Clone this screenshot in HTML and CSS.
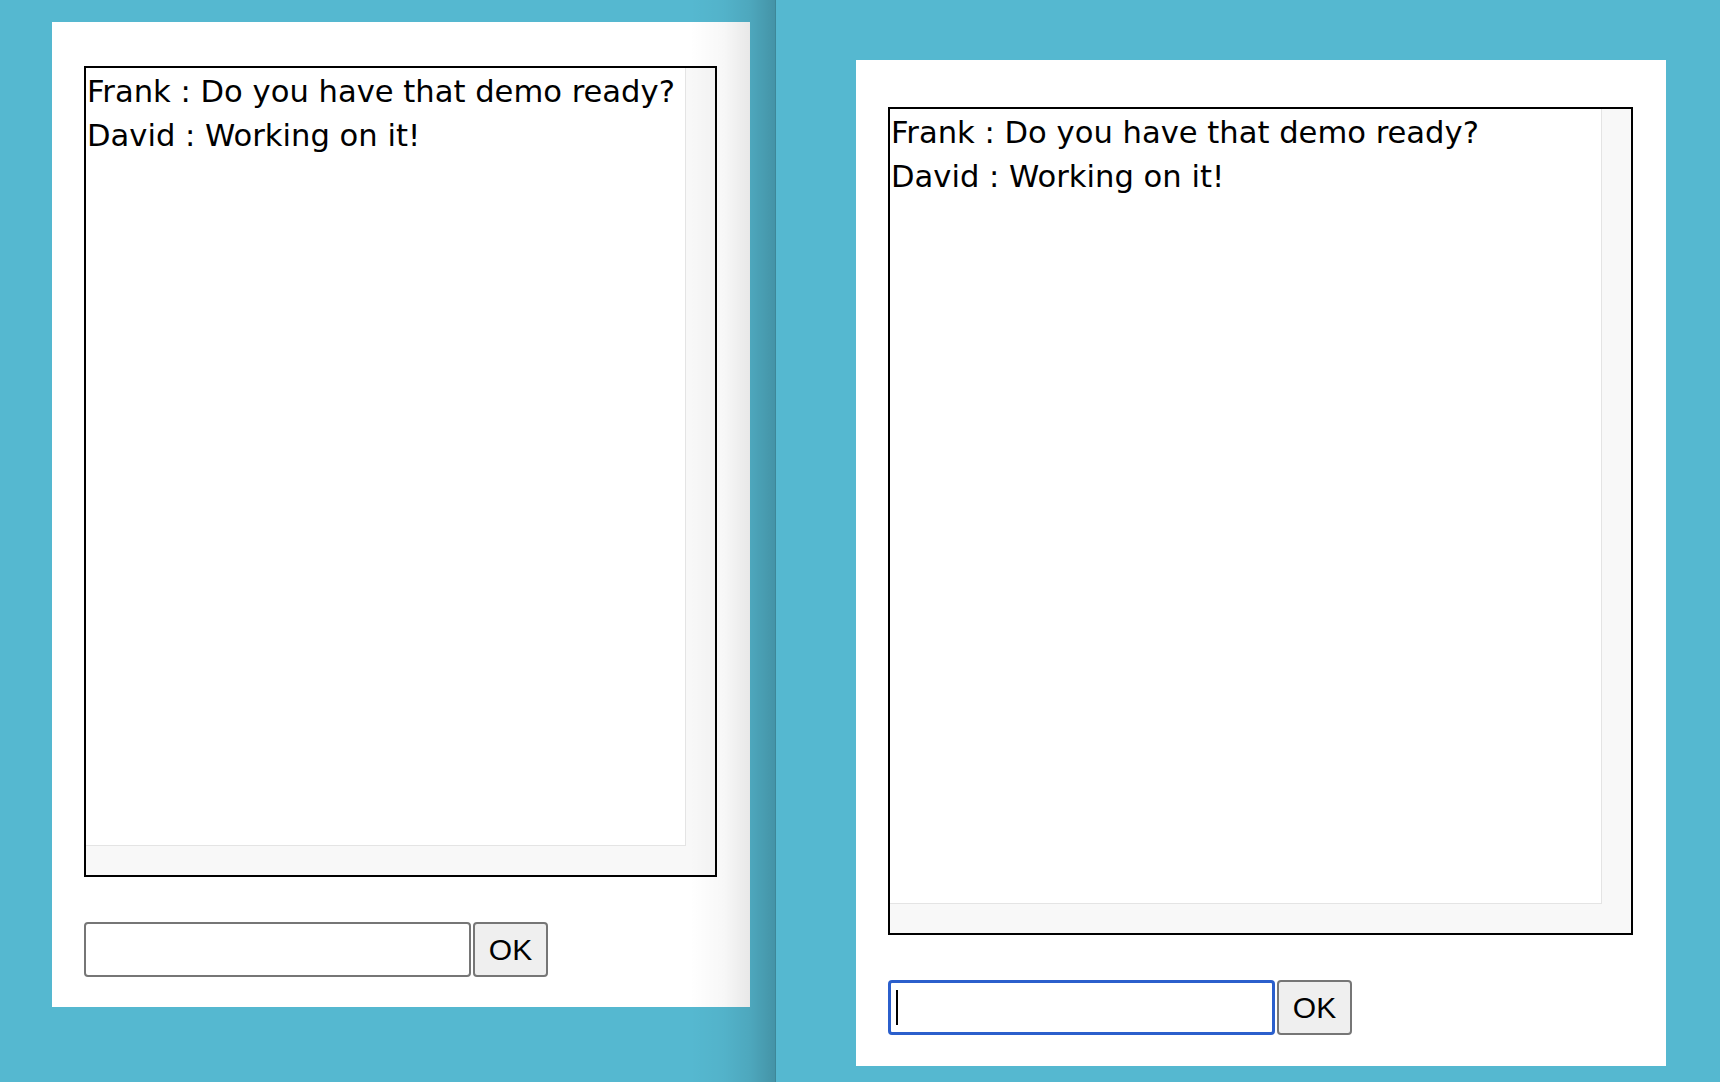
FILE: index.html
```html
<!DOCTYPE html>
<html lang="en">
<head>
<meta charset="utf-8">
<title>Chat demo</title>
<link rel="stylesheet" href="styles.css">
</head>
<body>
<div class="screen">
  <section class="pane pane-left">
    <div class="card card-left">
      <div class="log log-left">
        <div class="log-content">
          <div class="msg">Frank : Do you have that demo ready?</div>
          <div class="msg">David : Working on it!</div>
        </div>
      </div>
      <form class="composer">
        <input class="field" type="text" aria-label="Message">
        <button class="ok" type="button">OK</button>
      </form>
    </div>
  </section>
  <section class="pane pane-right">
    <div class="card card-right">
      <div class="log log-right">
        <div class="log-content">
          <div class="msg">Frank : Do you have that demo ready?</div>
          <div class="msg">David : Working on it!</div>
        </div>
      </div>
      <form class="composer composer-right">
        <div class="field-wrap">
          <input class="field field-focus" type="text" aria-label="Message">
          <span class="caret"></span>
        </div>
        <button class="ok" type="button">OK</button>
      </form>
    </div>
  </section>
</div>
</body>
</html>
```
FILE: styles.css
```css
html, body {
  margin: 0;
  padding: 0;
}
body {
  background: #55b8d0;
  font-family: "DejaVu Sans", sans-serif;
}
.screen {
  display: flex;
  height: 1082px;
  overflow: hidden;
}
.pane-left {
  position: relative;
  width: 775px;
  flex: none;
  box-sizing: border-box;
  padding: 22px 0 0 52px;
}
.pane-left::after {
  content: "";
  position: absolute;
  top: 0;
  bottom: 0;
  right: 0;
  width: 85px;
  pointer-events: none;
  background: linear-gradient(to right,
    rgba(0, 0, 0, 0) 0%,
    rgba(0, 0, 0, 0.03) 40%,
    rgba(0, 0, 0, 0.09) 70%,
    rgba(0, 0, 0, 0.2) 100%);
}
.pane-right {
  flex: 1;
  border-left: 1px solid #3d8798;
  padding: 60px 0 0 80px;
}
.card {
  background: #fff;
  box-sizing: border-box;
  padding: 44px 33px 0 32px;
  display: flex;
  flex-direction: column;
}
.card-left {
  width: 698px;
  height: 985px;
}
.card-right {
  width: 810px;
  height: 1006px;
  padding-top: 47px;
}
.log {
  border: 2px solid #000;
  background: #f8f8f8;
  display: flex;
  box-sizing: border-box;
}
.log-left {
  height: 811px;
}
.log-right {
  height: 828px;
}
.log-content {
  flex: 1;
  background: #fff;
  margin: 0 29px 29px 0;
  border-right: 1px solid #e4e4e4;
  border-bottom: 1px solid #e4e4e4;
  padding: 2px 1px 0;
  overflow: hidden;
}
.msg {
  font-size: 30.6px;
  line-height: 44px;
  color: #000;
  white-space: nowrap;
}
.composer {
  display: flex;
  gap: 2px;
  margin: 45px 0 0;
}
.field {
  display: block;
  width: 387px;
  height: 55px;
  box-sizing: border-box;
  margin: 0;
  padding: 0 6px;
  border: 2px solid #767676;
  border-radius: 4px;
  background: #fff;
  font: 29px "DejaVu Sans", sans-serif;
  outline: none;
}
.field-wrap {
  position: relative;
}
.field-focus {
  border: 3px solid #2b5fcc;
}
.caret {
  position: absolute;
  left: 8px;
  top: 10px;
  width: 2px;
  height: 35px;
  background: #000;
}
.ok {
  width: 75px;
  height: 55px;
  box-sizing: border-box;
  margin: 0;
  padding: 0;
  border: 2px solid #767676;
  border-radius: 4px;
  background: #efefef;
  color: #000;
  font: 30px "Liberation Sans", Arial, sans-serif;
}
```
